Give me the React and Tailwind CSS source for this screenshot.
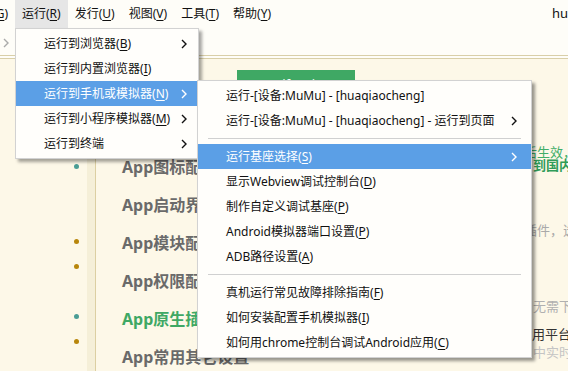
import React from "react";

const FONT = "font-['Noto_Sans','Noto_Sans_CJK_SC',sans-serif]";

const barItems = [
  { t: "转到", k: "G" },
  { t: "运行", k: "R", active: true },
  { t: "发行", k: "U" },
  { t: "视图", k: "V" },
  { t: "工具", k: "T" },
  { t: "帮助", k: "Y" },
];

const runMenu = [
  { t: "运行到浏览器", k: "B", sub: true },
  { t: "运行到内置浏览器", k: "I" },
  { t: "运行到手机或模拟器", k: "N", sub: true, active: true },
  { t: "运行到小程序模拟器", k: "M", sub: true },
  { t: "运行到终端", sub: true },
];

const deviceMenu = [
  { t: "运行-[设备:MuMu] - [huaqiaocheng]" },
  { t: "运行-[设备:MuMu] - [huaqiaocheng] - 运行到页面", sub: true },
  "sep",
  { t: "运行基座选择", k: "S", sub: true, active: true },
  { t: "显示Webview调试控制台", k: "D" },
  { t: "制作自定义调试基座", k: "P" },
  { t: "Android模拟器端口设置", k: "P" },
  { t: "ADB路径设置", k: "A" },
  "sep",
  { t: "真机运行常见故障排除指南", k: "F" },
  { t: "如何安装配置手机模拟器", k: "I" },
  { t: "如何用chrome控制台调试Android应用", k: "C" },
];

// gutter markers, one slot per 25px
const dots = [null, null, null, "teal", null, null, "gold", "gold", null, "teal", "gold"];

const headings = [
  { t: "App图标配置" },
  { t: "App启动界面配置" },
  { t: "App模块配置" },
  { t: "App权限配置" },
  { t: "App原生插件配置", green: true },
  { t: "App常用其它设置" },
];

function Chevron() {
  return (
    <svg width="6" height="10" viewBox="0 0 6 10">
      <path d="M1 1l4 4-4 4" fill="none" stroke="currentColor" strokeWidth="1.4" />
    </svg>
  );
}

function Label({ t, k }) {
  return (
    <span className="whitespace-nowrap">
      {t}
      {k && (
        <>
          (<span className="underline underline-offset-2">{k}</span>)
        </>
      )}
    </span>
  );
}

function MenuItem({ item, pr }) {
  return (
    <div
      className={`flex h-[25px] items-center justify-between pl-[28px] ${pr} ${
        item.active ? "bg-[#5b9fe6] text-white" : "text-[#111]"
      }`}
    >
      <Label t={item.t} k={item.k} />
      {item.sub && <Chevron />}
    </div>
  );
}

export default function App() {
  return (
    <div className={`relative h-[371px] w-[568px] overflow-hidden bg-[#fefdf8] text-[12px] ${FONT}`}>
      {/* menu bar */}
      <div className="flex h-[28px] items-center text-[#111]">
        {barItems.map((b, i) => (
          <div
            key={b.k}
            className={`flex h-[28px] items-center px-[7px] ${i === 0 ? "ml-[-39px]" : ""} ${
              b.active ? "bg-[#e6e6e6]" : ""
            }`}
          >
            <Label t={b.t} k={b.k} />
          </div>
        ))}
        <div className="ml-auto w-[16px] whitespace-nowrap text-[13px]">huaqiaocheng</div>
      </div>

      {/* toolbar */}
      <div className="flex h-[27px] items-center pl-[3px] pt-[3px] text-[#aaa]">
        <Chevron />
      </div>
      <div className="h-[4px] border-y border-[#d9cfa8]" />

      {/* content */}
      <div className="flex h-[312px] bg-[#fdf8e8]">
        <div className="flex">
          <div className="w-[87px] pt-[20px]">
            {dots.map((d, i) => (
              <div key={i} className="flex h-[25px] items-center pl-[74px]">
                {d && (
                  <div
                    className={`h-[5px] w-[5px] rounded-full ${d === "teal" ? "bg-[#4a9d95]" : "bg-[#b8860b]"}`}
                  />
                )}
              </div>
            ))}
          </div>
          <div className="w-[8px] bg-[#f5efd8]" />
          <div className="w-[1px] bg-[#dccfa2]" />
        </div>

        <div className="flex pl-[26px]">
          <div className="w-[402px]">
            <div className="ml-[115px] mt-[11px] flex h-[30px] w-[118px] items-center justify-center bg-[#3fa864] text-[13px] text-white">
              manifest.json
            </div>
            <div className="mt-[48px]">
              {headings.map((h) => (
                <div
                  key={h.t}
                  className={`h-[38px] text-[16px] font-bold leading-[38px] ${
                    h.green ? "text-[#3fa864]" : "text-[#6a6a6a]"
                  }`}
                >
                  {h.t}
                </div>
              ))}
            </div>
          </div>

          <div className="whitespace-nowrap text-[13px] leading-[13px]">
            <p className="mt-[87px] text-[#3fae68]">后生效，请</p>
            <p className="ml-[9px] font-bold text-[#2f9c58]">到国内服务器</p>
            <p className="mt-[52px] text-[#a9a9a9]">插件，选择</p>
            <p className="ml-[9px] mt-[63px] text-[#b0b0b0]">无需下载</p>
            <p className="ml-[8px] mt-[15px] text-[#333]">用平台</p>
            <p className="ml-[9px] mt-[5px] text-[#c4c4c4]">中实时</p>
          </div>
        </div>
      </div>

      {/* 运行 menu */}
      <div className="absolute left-[15px] top-[28px] w-[184px] border border-[#d2d2d2] bg-[#fffefb] py-[2px] shadow-[3px_3px_3px_rgba(0,0,0,0.35)]">
        {runMenu.map((m) => (
          <MenuItem key={m.t} item={m} pr="pr-[11px]" />
        ))}
      </div>

      {/* device submenu */}
      <div className="absolute left-[197px] top-[80px] w-[335px] border border-[#d2d2d2] bg-[#fffefb] py-[2px] shadow-[3px_3px_3px_rgba(0,0,0,0.4)]">
        {deviceMenu.map((m, i) =>
          m === "sep" ? (
            <div key={i} className="flex h-[11px] items-center pl-[10px] pr-[10px]">
              <div className="h-[1px] w-full bg-[#d0d0d0]" />
            </div>
          ) : (
            <MenuItem key={i} item={m} pr="pr-[14px]" />
          )
        )}
      </div>
    </div>
  );
}
